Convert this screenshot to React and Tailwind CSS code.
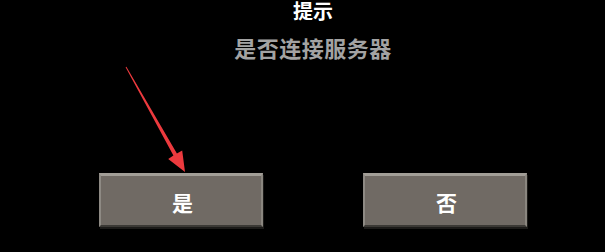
import React from "react";

function Btn({ label }) {
  return (
    <div className="w-[164px] h-[54px] bg-[#706a64] border-t-[3px] border-l-2 border-r-2 border-b-2 border-t-[#a29e97] border-l-[#8e8a84] border-r-[#8a867f] border-b-[#3b3935] flex items-center justify-center shadow-[1px_2px_0_#1c1b19]">
      <span className="text-white text-[21px] leading-[21px] font-bold pl-[3px] pt-[3px]">{label}</span>
    </div>
  );
}

export default function App() {
  return (
    <div
      className="relative w-[605px] h-[252px] bg-black overflow-hidden flex flex-col items-center pl-[21px]"
      style={{ fontFamily: '"Noto Sans CJK SC", "Noto Sans", sans-serif' }}
    >
      <div className="text-white text-[20px] leading-[22px] font-bold">提示</div>
      <div className="text-[#a3a3a3] text-[22px] leading-[22px] font-bold mt-[14px] tracking-[0.5px]">是否连接服务器</div>
      <div className="flex gap-[100px] mt-[115px]">
        <Btn label="是" />
        <Btn label="否" />
      </div>
      <svg className="absolute left-0 top-0 pointer-events-none" width="605" height="252">
        <polygon
          points="125.6,67.2 173.4,155.6 168.2,159 185,172 182.2,150.6 176.9,153.6 126.4,66.8"
          fill="#ec3a3e"
        />
      </svg>
    </div>
  );
}
